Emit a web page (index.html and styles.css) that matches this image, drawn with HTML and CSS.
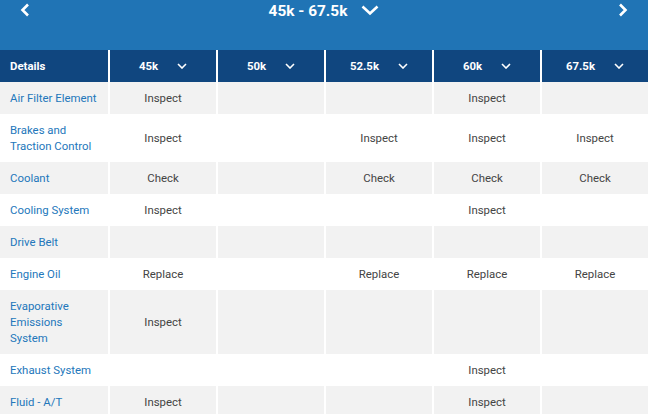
FILE: index.html
```html
<!DOCTYPE html>
<html>
<head>
<meta charset="utf-8">
<link rel="stylesheet" href="styles.css">
</head>
<body>
<div class="page">
  <div class="topbar">
    <span class="nav"><svg width="10" height="14" viewBox="0 0 10 14"><path d="M8 1.5 L2.5 7 L8 12.5" fill="none" stroke="#fff" stroke-width="2.6"/></svg></span>
    <div class="range">
      <span class="range-text">45k - 67.5k</span>
      <svg width="18" height="11" viewBox="0 0 18 11"><path d="M1.5 1.5 L9 8.5 L16.5 1.5" fill="none" stroke="#fff" stroke-width="2.6"/></svg>
    </div>
    <span class="nav"><svg width="10" height="14" viewBox="0 0 10 14"><path d="M2 1.5 L7.5 7 L2 12.5" fill="none" stroke="#fff" stroke-width="2.6"/></svg></span>
  </div>
  <div class="row head">
    <div class="cell label">Details</div>
    <div class="cell">45k <svg class="chev" viewBox="0 0 10 6"><path d="M1 1 L5 5 L9 1" fill="none" stroke="#fff" stroke-width="1.6"/></svg></div>
    <div class="cell">50k <svg class="chev" viewBox="0 0 10 6"><path d="M1 1 L5 5 L9 1" fill="none" stroke="#fff" stroke-width="1.6"/></svg></div>
    <div class="cell">52.5k <svg class="chev" viewBox="0 0 10 6"><path d="M1 1 L5 5 L9 1" fill="none" stroke="#fff" stroke-width="1.6"/></svg></div>
    <div class="cell">60k <svg class="chev" viewBox="0 0 10 6"><path d="M1 1 L5 5 L9 1" fill="none" stroke="#fff" stroke-width="1.6"/></svg></div>
    <div class="cell">67.5k <svg class="chev" viewBox="0 0 10 6"><path d="M1 1 L5 5 L9 1" fill="none" stroke="#fff" stroke-width="1.6"/></svg></div>
  </div>
  <div class="row gray">
    <div class="cell label">Air Filter Element</div>
    <div class="cell">Inspect</div><div class="cell"></div><div class="cell"></div><div class="cell">Inspect</div><div class="cell"></div>
  </div>
  <div class="row">
    <div class="cell label">Brakes and<br>Traction Control</div>
    <div class="cell">Inspect</div><div class="cell"></div><div class="cell">Inspect</div><div class="cell">Inspect</div><div class="cell">Inspect</div>
  </div>
  <div class="row gray">
    <div class="cell label">Coolant</div>
    <div class="cell">Check</div><div class="cell"></div><div class="cell">Check</div><div class="cell">Check</div><div class="cell">Check</div>
  </div>
  <div class="row">
    <div class="cell label">Cooling System</div>
    <div class="cell">Inspect</div><div class="cell"></div><div class="cell"></div><div class="cell">Inspect</div><div class="cell"></div>
  </div>
  <div class="row gray">
    <div class="cell label">Drive Belt</div>
    <div class="cell"></div><div class="cell"></div><div class="cell"></div><div class="cell"></div><div class="cell"></div>
  </div>
  <div class="row">
    <div class="cell label">Engine Oil</div>
    <div class="cell">Replace</div><div class="cell"></div><div class="cell">Replace</div><div class="cell">Replace</div><div class="cell">Replace</div>
  </div>
  <div class="row gray">
    <div class="cell label">Evaporative<br>Emissions<br>System</div>
    <div class="cell">Inspect</div><div class="cell"></div><div class="cell"></div><div class="cell"></div><div class="cell"></div>
  </div>
  <div class="row">
    <div class="cell label">Exhaust System</div>
    <div class="cell"></div><div class="cell"></div><div class="cell"></div><div class="cell">Inspect</div><div class="cell"></div>
  </div>
  <div class="row gray">
    <div class="cell label">Fluid - A/T</div>
    <div class="cell">Inspect</div><div class="cell"></div><div class="cell"></div><div class="cell">Inspect</div><div class="cell"></div>
  </div>
</div>
</body>
</html>
```
FILE: styles.css
```css
html, body {
  margin: 0;
  padding: 0;
  background: #fff;
  overflow: hidden;
}
.page {
  width: 648px;
  font-family: Roboto, "Liberation Sans", sans-serif;
  font-size: 11.4px;
}
.topbar {
  background: #2074b5;
  height: 50px;
  display: flex;
  align-items: flex-start;
  justify-content: space-between;
  padding: 0 20px 0 20px;
  box-sizing: border-box;
}
.nav {
  display: flex;
  padding-top: 3px;
}
.range {
  display: flex;
  align-items: center;
  gap: 14px;
  height: 21px;
}
.range-text {
  color: #fff;
  font-weight: 700;
  font-size: 15.4px;
}
.row {
  display: grid;
  grid-template-columns: 108px repeat(5, 1fr);
  column-gap: 2px;
}
.cell {
  display: flex;
  align-items: center;
  justify-content: center;
  padding: 8px 0;
  line-height: 16px;
  color: #444;
}
.cell.label {
  justify-content: flex-start;
  padding-left: 10px;
  color: #2377bb;
}
.gray .cell {
  background: #f2f2f2;
}
.head .cell {
  background: #10467f;
  color: #fff;
  font-weight: 700;
  height: 32px;
  padding: 0;
  box-sizing: border-box;
}
.head .cell.label {
  padding-left: 10px;
}
.chev {
  width: 10px;
  height: 6px;
  margin-left: 19px;
}
```
